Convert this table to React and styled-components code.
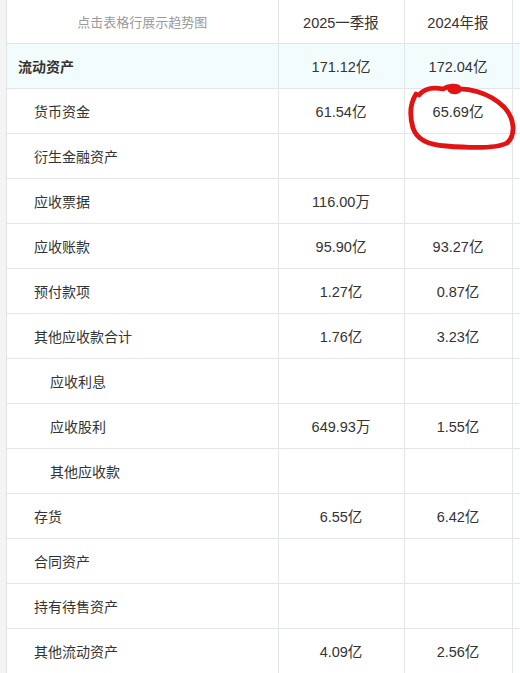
import React from "react";
import styled, { createGlobalStyle } from "styled-components";

const GlobalStyle = createGlobalStyle`
  html, body {
    margin: 0;
    padding: 0;
    background: #ffffff;
  }
  body {
    font-family: "Liberation Sans", "Noto Sans CJK SC", sans-serif;
    overflow: hidden;
  }
`;

const Page = styled.div`
  position: relative;
  width: 520px;
  height: 673px;
  overflow: hidden;
  display: flex;
  background: #fff;
`;

const SideStrip = styled.div`
  width: 6px;
  flex: none;
  background: #f4f4f4;
  border-right: 1px solid #e3e3e3;
`;

const Table = styled.table`
  border-collapse: collapse;
  table-layout: fixed;
  width: 560px;
  flex: none;
`;

const HeadCell = styled.th`
  height: 43px;
  padding: 0;
  font-weight: normal;
  text-align: center;
  font-size: ${(p) => (p.$hint ? "13px" : "14.5px")};
  color: ${(p) => (p.$hint ? "#9a9a9a" : "#333")};
  border-right: 1px solid #e2e6e8;
  border-bottom: 1px solid #dfe4e6;
  box-sizing: border-box;
`;

const Row = styled.tr`
  background: ${(p) => (p.$active ? "#f3fcfc" : "#fff")};
`;

const NameCell = styled.td`
  height: 45px;
  padding: 0 0 0 ${(p) => 11 + p.$level * 16}px;
  font-size: 14px;
  color: #333;
  font-weight: ${(p) => (p.$bold ? 700 : 400)};
  border-right: 1px solid #e2e6e8;
  border-bottom: 1px solid #e3e6e8;
  box-sizing: border-box;
  white-space: nowrap;
`;

const ValueCell = styled.td`
  height: 45px;
  padding: 0;
  text-align: center;
  font-size: 14.5px;
  color: #333;
  border-right: 1px solid #e2e6e8;
  border-bottom: 1px solid #e3e6e8;
  box-sizing: border-box;
`;

const Mark = styled.svg`
  position: absolute;
  left: 0;
  top: 0;
  pointer-events: none;
`;

const rows = [
  { name: "流动资产", level: 0, bold: true, active: true, a: "171.12亿", b: "172.04亿" },
  { name: "货币资金", level: 1, a: "61.54亿", b: "65.69亿" },
  { name: "衍生金融资产", level: 1, a: "", b: "" },
  { name: "应收票据", level: 1, a: "116.00万", b: "" },
  { name: "应收账款", level: 1, a: "95.90亿", b: "93.27亿" },
  { name: "预付款项", level: 1, a: "1.27亿", b: "0.87亿" },
  { name: "其他应收款合计", level: 1, a: "1.76亿", b: "3.23亿" },
  { name: "应收利息", level: 2, a: "", b: "" },
  { name: "应收股利", level: 2, a: "649.93万", b: "1.55亿" },
  { name: "其他应收款", level: 2, a: "", b: "" },
  { name: "存货", level: 1, a: "6.55亿", b: "6.42亿" },
  { name: "合同资产", level: 1, a: "", b: "" },
  { name: "持有待售资产", level: 1, a: "", b: "" },
  { name: "其他流动资产", level: 1, a: "4.09亿", b: "2.56亿" },
];

export default function App() {
  return (
    <>
      <GlobalStyle />
      <Page>
        <SideStrip />
        <Table>
          <colgroup>
            <col style={{ width: 271 }} />
            <col style={{ width: 126 }} />
            <col style={{ width: 108 }} />
            <col />
          </colgroup>
          <thead>
            <tr>
              <HeadCell $hint>点击表格行展示趋势图</HeadCell>
              <HeadCell>2025一季报</HeadCell>
              <HeadCell>2024年报</HeadCell>
              <HeadCell />
            </tr>
          </thead>
          <tbody>
            {rows.map((r) => (
              <Row key={r.name} $active={r.active}>
                <NameCell $level={r.level} $bold={r.bold}>
                  {r.name}
                </NameCell>
                <ValueCell>{r.a}</ValueCell>
                <ValueCell>{r.b}</ValueCell>
                <ValueCell />
              </Row>
            ))}
          </tbody>
        </Table>
        <Mark width="520" height="673" viewBox="0 0 520 673">
          <path
            d="M419 95 C424 89 433 87 443 89 C448 86 457 85 459 88 C461 92 453 93 450 90 C466 86 490 93 504 107 C515 119 516 135 507 143 C496 149 470 148 446 146 C428 145 417 140 413 128 C409 114 411 102 416 94"
            fill="none"
            stroke="#e31313"
            strokeWidth="4.8"
            strokeLinecap="round"
            strokeLinejoin="round"
          />
        </Mark>
      </Page>
    </>
  );
}
